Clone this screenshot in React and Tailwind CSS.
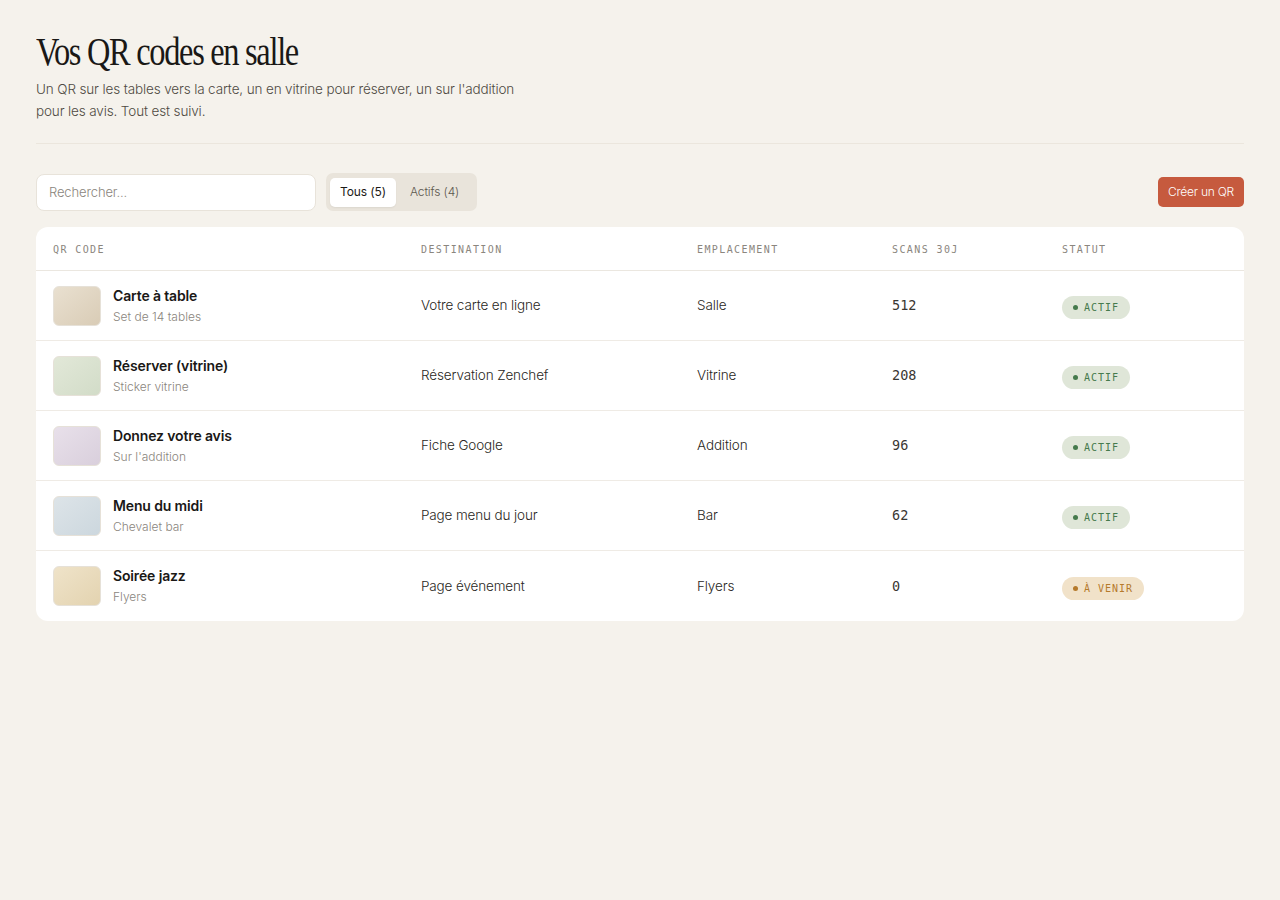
const ROWS = [
  { name: 'Carte à table', sub: 'Set de 14 tables', dest: 'Votre carte en ligne', place: 'Salle', scans: '512', status: 'actif', thumb: 'bg-gradient-to-br from-[#e9e0d0] to-[#d9ccb6]' },
  { name: 'Réserver (vitrine)', sub: 'Sticker vitrine', dest: 'Réservation Zenchef', place: 'Vitrine', scans: '208', status: 'actif', thumb: 'bg-gradient-to-br from-[#e2e8d8] to-[#d2dcc8]' },
  { name: 'Donnez votre avis', sub: "Sur l'addition", dest: 'Fiche Google', place: 'Addition', scans: '96', status: 'actif', thumb: 'bg-gradient-to-br from-[#e8e0ea] to-[#d9cfdc]' },
  { name: 'Menu du midi', sub: 'Chevalet bar', dest: 'Page menu du jour', place: 'Bar', scans: '62', status: 'actif', thumb: 'bg-gradient-to-br from-[#dde4e8] to-[#ccd7de]' },
  { name: 'Soirée jazz', sub: 'Flyers', dest: 'Page événement', place: 'Flyers', scans: '0', status: 'soon', thumb: 'bg-gradient-to-br from-[#efe3c9] to-[#e3d3b0]' },
]

const COLS = 'grid grid-cols-[368px_276px_195px_170px_1fr] px-[17px]'
const mono = "font-['DejaVu_Sans_Mono','Liberation_Mono',monospace]"

function Badge({ status }) {
  if (status === 'actif')
    return (
      <span className={`inline-flex items-center gap-[6px] h-[23px] px-[11px] rounded-full bg-[#dfe6d8] text-[#457a4c] text-[10px] tracking-[0.1em] ${mono}`}>
        <span className="w-[5px] h-[5px] rounded-full bg-[#457a4c]" />ACTIF
      </span>
    )
  return (
    <span className={`inline-flex items-center gap-[6px] h-[23px] px-[11px] rounded-full bg-[#f1e2c9] text-[#b57a2c] text-[10px] tracking-[0.1em] ${mono}`}>
      <span className="w-[5px] h-[5px] rounded-full bg-[#b57a2c]" />À VENIR
    </span>
  )
}

export default function App() {
  return (
    <div className="min-h-screen bg-[#f5f2ec] font-['Inter','Liberation_Sans',sans-serif] text-[#1c1a17]">
      <div className="px-[36px] pt-[30px]">
        <h1 className="font-['Liberation_Serif',serif] text-[40px] leading-[44px] tracking-[-0.04em] text-[#1a1816] scale-x-[0.81] origin-left">
          Vos QR codes en salle
        </h1>
        <p className="mt-[4px] text-[13.5px] font-light tracking-[-0.01em] leading-[22px] text-[#4f4a43] max-w-[500px]">
          Un QR sur les tables vers la carte, un en vitrine pour réserver, un sur l'addition pour les avis. Tout est suivi.
        </p>
        <div className="mt-[21px] h-px bg-[#ebe6dd]" />

        <div className="mt-[29px] flex items-center">
          <input
            placeholder="Rechercher..."
            className="w-[280px] h-[37px] rounded-[8px] bg-white border border-[#e8e3da] px-[12px] text-[13px] font-light tracking-[-0.01em] placeholder:text-[#8a857d] outline-none"
          />
          <div className="ml-[10px] flex items-center h-[38px] p-[4px] rounded-[7px] bg-[#e9e4db]">
            <button className="h-[29px] px-[10px] rounded-[5px] bg-white text-[12px] tracking-[-0.01em] text-[#1c1a17] shadow-[0_1px_2px_rgba(0,0,0,0.06)]">Tous (5)</button>
            <button className="h-[29px] px-[14px] text-[12px] font-light tracking-[-0.01em] text-[#5d584f]">Actifs (4)</button>
          </div>
          <button className="ml-auto h-[30px] px-[10px] rounded-[5px] bg-[#c65a3e] text-white text-[12px] tracking-[-0.02em] font-light">Créer un QR</button>
        </div>

        <div className="mt-[16px] bg-white rounded-[12px] overflow-hidden">
          <div className={`${COLS} h-[44px] pt-[2px] items-center border-b border-[#ebe7e0] text-[10px] tracking-[0.14em] text-[#8b867e] ${mono}`}>
            <div>QR CODE</div>
            <div>DESTINATION</div>
            <div>EMPLACEMENT</div>
            <div>SCANS 30J</div>
            <div>STATUT</div>
          </div>
          {ROWS.map((r, i) => (
            <div key={r.name} className={`${COLS} h-[70px] items-center ${i < ROWS.length - 1 ? 'border-b border-[#efebe5]' : ''}`}>
              <div className="flex items-center gap-[12px]">
                <div className={`w-[48px] h-[40px] rounded-[6px] border border-[#e6e1d8] ${r.thumb}`} />
                <div>
                  <div className="text-[14px] leading-[20px] font-semibold tracking-[-0.01em] text-[#1a1816]">{r.name}</div>
                  <div className="text-[12px] leading-[18px] mt-[2px] font-light text-[#8a857d]">{r.sub}</div>
                </div>
              </div>
              <div className="text-[13.5px] font-light tracking-[-0.01em] text-[#2a2723]">{r.dest}</div>
              <div className="text-[13.5px] font-light tracking-[-0.01em] text-[#2a2723]">{r.place}</div>
              <div className={`text-[13.5px] text-[#3a3732] ${mono}`}>{r.scans}</div>
              <div><Badge status={r.status} /></div>
            </div>
          ))}
        </div>
      </div>
    </div>
  )
}
